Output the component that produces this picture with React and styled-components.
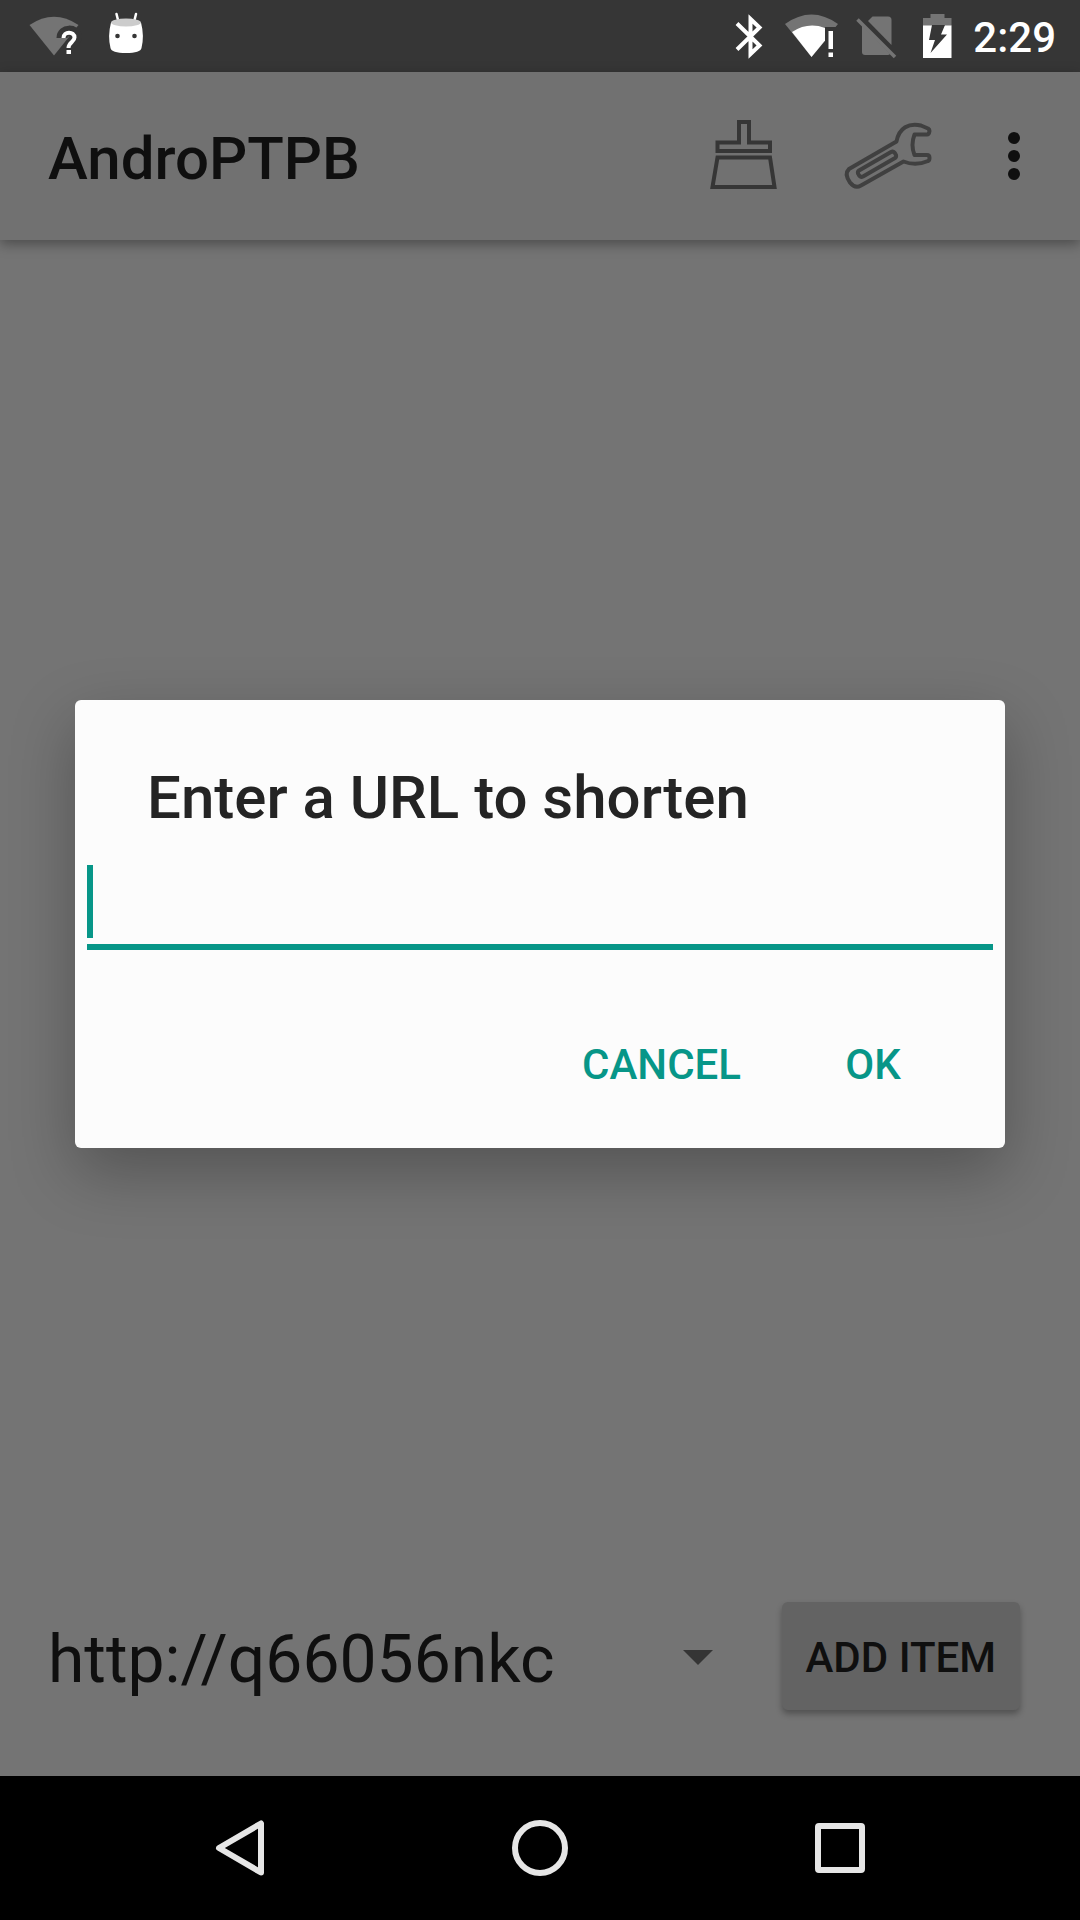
import React from "react";
import styled, { createGlobalStyle } from "styled-components";

const teal = "#079688";
const ink = "#0f0f0f";

const GlobalStyle = createGlobalStyle`
  *, *::before, *::after { box-sizing: border-box; }
  body { margin: 0; background: #747474; font-family: Roboto, "Liberation Sans", sans-serif; }
  button, input, select { margin: 0; padding: 0; border: 0; background: none; border-radius: 0; font: inherit; color: inherit; outline: none; }
  button { cursor: pointer; }
  svg { display: block; flex: none; }
`;

const Screen = styled.div`
  display: flex;
  flex-direction: column;
  min-height: 100vh;
  color: ${ink};
`;

const StatusBar = styled.header`
  display: flex;
  justify-content: space-between;
  height: 72px;
  padding: 0 24px 0 28px;
  background: #363636;
`;

const StatusGroup = styled.div`
  display: flex;
  align-items: center;
  gap: ${(p) => p.$gap}px;
`;

const Clock = styled.time`
  color: #fff;
  font-size: 42px;
  font-weight: 500;
  line-height: 72px;
  padding: 4px 0 0 1px;
`;

const Main = styled.main`
  position: relative;
  display: flex;
  flex: 1;
  flex-direction: column;
`;

const Toolbar = styled.div`
  display: flex;
  align-items: center;
  height: 168px;
  padding: 0 12px 0 48px;
  background: #717171;
  box-shadow: 0 4px 12px rgba(0, 0, 0, 0.35);
`;

const AppTitle = styled.h1`
  flex: 1;
  margin: 0;
  padding-top: 6px;
  font-size: 60px;
  font-weight: 500;
  line-height: 70px;
`;

const IconButton = styled.button`
  display: flex;
  align-items: center;
  justify-content: center;
  width: ${(p) => p.$width}px;
  height: 144px;
`;

const Body = styled.section`
  flex: 1;
`;

const BottomRow = styled.form`
  display: flex;
  align-items: center;
  gap: 36px;
  padding: 0 60px 66px 48px;
`;

const Spinner = styled.div`
  display: grid;
  flex: 1;
  align-items: center;
  > * { grid-area: 1 / 1; }
  > svg { justify-self: end; pointer-events: none; }
`;

const SpinnerSelect = styled.select`
  appearance: none;
  width: 100%;
  height: 108px;
  padding-top: 8px;
  font-size: 66px;
  line-height: 78px;
`;

const AddButton = styled.button`
  height: 108px;
  padding: 2px 24px 0;
  border-radius: 6px;
  background: #636363;
  box-shadow: 0 4px 6px rgba(0, 0, 0, 0.3);
  font-size: 42px;
  font-weight: 500;
`;

const Overlay = styled.div`
  position: absolute;
  inset: 0;
  display: flex;
  align-items: center;
  padding: 0 75px;
`;

const Dialog = styled.form`
  flex: 1;
  padding: 63px 12px 30px;
  border-radius: 6px;
  background: #fcfcfc;
  box-shadow: 0 24px 64px rgba(0, 0, 0, 0.28);
`;

const DialogTitle = styled.label`
  display: block;
  margin: 0 60px 32px;
  color: #242424;
  font-size: 60px;
  font-weight: 500;
  line-height: 70px;
`;

const Field = styled.div`
  display: flex;
  padding-bottom: 6px;
  border-bottom: 6px solid ${teal};
`;

const Caret = styled.span`
  width: 6px;
  background: ${teal};
`;

const FieldInput = styled.input`
  flex: 1;
  min-width: 0;
  height: 73px;
  color: #242424;
  caret-color: ${teal};
  font-size: 54px;
`;

const Actions = styled.div`
  display: flex;
  justify-content: flex-end;
  padding: 60px 24px 0 0;
`;

const ActionButton = styled.button`
  min-width: 192px;
  height: 108px;
  padding: 0 36px;
  color: ${teal};
  font-size: 42px;
  font-weight: 500;
`;

const NavBar = styled.nav`
  display: flex;
  height: 144px;
  padding: 0 90px;
  background: #000;
`;

const NavButton = styled.button`
  display: flex;
  flex: 1;
  align-items: center;
  justify-content: center;
`;

const WifiUnknown = () => (
  <svg width="54" height="72" viewBox="28 0 54 72" aria-hidden="true">
    <path d="M29.500 25 Q54 8.500 78.500 25 L54 55.500Z" fill="#747474" />
    <path d="M62 38 C62 29 76 29 76 37 C76 43 69 43 69 49" fill="none" stroke="#363636" strokeWidth="11" />
    <path d="M63.500 38 C63.500 31 74.500 31 74.500 37.500 C74.500 42 68.500 42 68.500 48" fill="none" stroke="#fff" strokeWidth="4" />
    <path d="M66.500 50h4.500v4h-4.500z" fill="#fff" />
  </svg>
);

const AndroidHead = () => (
  <svg width="40" height="72" viewBox="106 0 40 72" aria-hidden="true">
    <path d="M116.500 14l2 8M136 14l-2 8" stroke="#fff" strokeWidth="2.500" strokeLinecap="round" />
    <path d="M111 22.500 Q126 29 141 22.500 Q144.500 36 141.500 48 Q140.500 53 126 53 Q111.500 53 110.500 48 Q107.500 36 111 22.500Z" fill="#fff" />
    <ellipse cx="126" cy="22.500" rx="15" ry="4" fill="#ccc" />
    <circle cx="117.500" cy="36" r="2.300" fill="#363636" />
    <circle cx="134.500" cy="36" r="2.300" fill="#363636" />
  </svg>
);

const Bluetooth = () => (
  <svg width="36" height="72" viewBox="732 0 36 72" aria-hidden="true">
    <path d="M737 23.500 L759.500 45.500 L750.500 54 V19 L759.500 27.500 L737 49.500" fill="none" stroke="#fff" strokeWidth="4" />
  </svg>
);

const WifiAlert = () => (
  <svg width="56" height="72" viewBox="784 0 56 72" aria-hidden="true">
    <path d="M785 24 Q811.500 5 838 24 L835.500 27 H825 V41 L811.500 57Z" fill="#747474" />
    <path d="M792 32 Q808 21.500 825 28 V40.500 L811.500 57Z" fill="#fff" />
    <path d="M828.500 31h4.500v18h-4.500zM828.500 52.500h4.500v4.500h-4.500z" fill="#fff" />
  </svg>
);

const NoSim = () => (
  <svg width="44" height="72" viewBox="856 0 44 72" aria-hidden="true">
    <path d="M872.500 16.500 H888 Q891.500 16.500 891.500 20 V45 L868 21Z" fill="#747474" />
    <path d="M862 25 L890 54 Q889 55 888 55 H865 Q862 55 862 52Z" fill="#747474" />
    <path d="M857.500 19.500 L895 57" stroke="#747474" strokeWidth="3.500" />
  </svg>
);

const Battery = () => (
  <svg width="40" height="72" viewBox="916 0 40 72" aria-hidden="true">
    <path d="M930.500 14h14v4h7v8h-28.500v-8h7.500z" fill="#747474" />
    <path d="M923 25.500h28.500v32.500h-28.500z" fill="#fff" />
    <path d="M932 25 H945 L941 34.500 H947 L930.500 53 L935 40 H929Z" fill="#363636" />
  </svg>
);

const Brush = () => (
  <svg width="72" height="72" viewBox="708 120 72 72" aria-hidden="true">
    <g fill="none" stroke="#363636" strokeWidth="4">
      <path d="M739 122 H749 V142.500 H770 V151 H717.500 V142.500 H739Z" />
      <path d="M717.500 157.500 H770 L774.500 187 H712.500Z" />
    </g>
  </svg>
);

const Wrench = () => (
  <svg width="96" height="72" viewBox="840 120 96 72" aria-hidden="true">
    <g fill="none" stroke="#404040" strokeWidth="4" strokeLinejoin="round">
      <path d="M896.500 141.500 C899 128 909 122.500 921 125.500 L928 128.500 Q929.500 129.500 929.500 131 Q929 134.500 927 134.500 H914.500 Q910.500 145 914.500 155 H927 Q929.500 155 929.500 158 Q929.500 160.500 928 161 C920 164.500 911 164.500 903.500 161.500 L861 185.500 Q855 189 850 182.500 Q844 174 849 169 Z" />
      <path d="M891 152 Q894 150.500 896 155 Q896.500 157 895 158 L863 176.500 Q860 178 858 173.500 Q857.500 171.500 859 170.500 Z" />
    </g>
  </svg>
);

const Dots = () => (
  <svg width="12" height="48" viewBox="0 0 12 48" aria-hidden="true">
    <g fill={ink}>
      <circle cx="6" cy="6" r="6" />
      <circle cx="6" cy="24" r="6" />
      <circle cx="6" cy="42" r="6" />
    </g>
  </svg>
);

const DropArrow = () => (
  <svg width="96" height="96" viewBox="0 0 96 96" aria-hidden="true">
    <path d="M33 42h30l-15 15z" fill="#353535" />
  </svg>
);

const navShapes = [
  ["Back", <path key="b" d="M15 36 L57 11.500 V60.500Z" />],
  ["Home", <circle key="h" cx="36" cy="36" r="25" />],
  ["Recent apps", <rect key="r" x="14" y="14" width="44" height="44" rx="1" />],
];

export default function App() {
  return (
    <Screen>
      <GlobalStyle />
      <StatusBar>
        <StatusGroup $gap={24}>
          <WifiUnknown />
          <AndroidHead />
        </StatusGroup>
        <StatusGroup $gap={16}>
          <Bluetooth />
          <WifiAlert />
          <NoSim />
          <Battery />
          <Clock>2:29</Clock>
        </StatusGroup>
      </StatusBar>
      <Main>
        <Toolbar>
          <AppTitle>AndroPTPB</AppTitle>
          <IconButton $width={144} type="button" aria-label="Clear"><Brush /></IconButton>
          <IconButton $width={144} type="button" aria-label="Settings"><Wrench /></IconButton>
          <IconButton $width={108} type="button" aria-label="More options"><Dots /></IconButton>
        </Toolbar>
        <Body />
        <BottomRow onSubmit={(e) => e.preventDefault()}>
          <Spinner>
            <SpinnerSelect aria-label="Address">
              <option>http://q66056nkc</option>
            </SpinnerSelect>
            <DropArrow />
          </Spinner>
          <AddButton type="submit">ADD ITEM</AddButton>
        </BottomRow>
        <Overlay>
          <Dialog role="dialog" aria-labelledby="url-title" onSubmit={(e) => e.preventDefault()}>
            <DialogTitle id="url-title" htmlFor="url">Enter a URL to shorten</DialogTitle>
            <Field>
              <Caret />
              <FieldInput id="url" type="text" />
            </Field>
            <Actions>
              <ActionButton type="button">CANCEL</ActionButton>
              <ActionButton type="submit">OK</ActionButton>
            </Actions>
          </Dialog>
        </Overlay>
      </Main>
      <NavBar>
        {navShapes.map(([name, shape]) => (
          <NavButton key={name} type="button" aria-label={name}>
            <svg width="72" height="72" viewBox="0 0 72 72" fill="none" stroke="#e6e6e6" strokeWidth="6" strokeLinejoin="round">
              {shape}
            </svg>
          </NavButton>
        ))}
      </NavBar>
    </Screen>
  );
}
